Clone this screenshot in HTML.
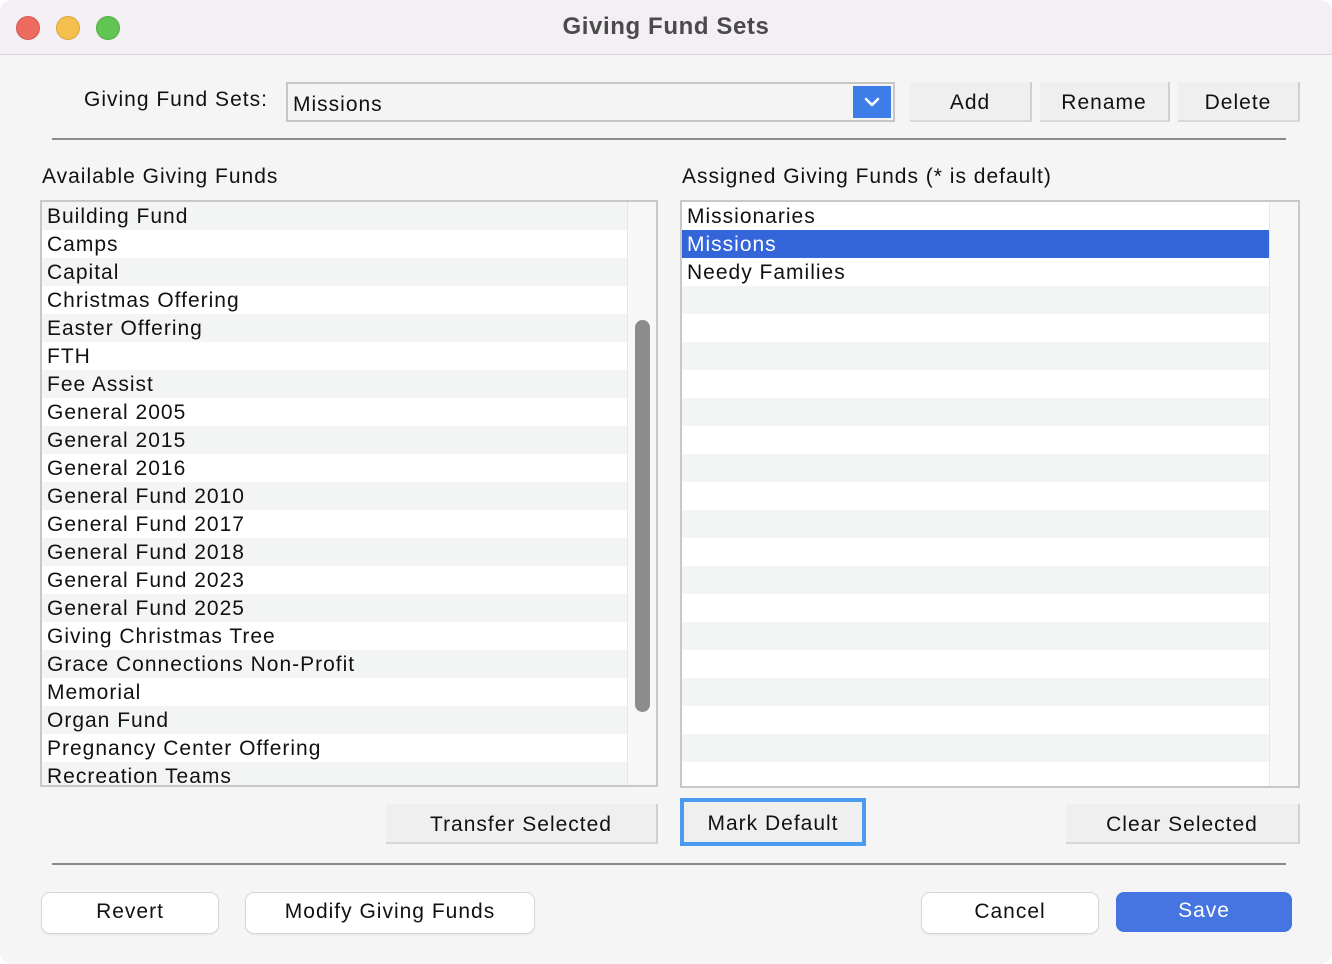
<!DOCTYPE html>
<html><head><meta charset="utf-8"><style>
*{margin:0;padding:0;box-sizing:border-box}
body{width:1332px;height:964px;background:#fff;font-family:"Liberation Sans",sans-serif;color:#111;position:relative;overflow:hidden}
.win{position:absolute;left:0;top:0;width:1332px;height:964px;background:#f5f5f5;border-radius:12px;overflow:hidden}
.title{position:absolute;left:0;top:0;width:1332px;height:55px;background:#f3eff5;border-bottom:1px solid #d4d2d6}
.title .t{position:absolute;left:0;width:100%;top:13px;text-align:center;font-weight:bold;font-size:24px;color:#4a4a4a;letter-spacing:.6px}
.dot{position:absolute;top:16px;width:24px;height:24px;border-radius:50%}
.a{position:absolute;font-size:21px;white-space:nowrap;letter-spacing:1px}
.hr{position:absolute;height:2px;background:#8a8a8a}
.list{position:absolute;border:2px solid #c8c8c8;background:#fff;overflow:hidden}
.row{height:28px;line-height:30px;padding-left:5px;font-size:21px;white-space:nowrap;letter-spacing:1px}
.g{background:#f3f4f4}
.fb{position:absolute;background:#efefef;border-bottom:2px solid #d8d8d8;border-right:2px solid #d0d0d0;font-size:21px;text-align:center;letter-spacing:1px}
.rb{position:absolute;background:#fff;border-radius:8px;box-shadow:0 0 0 1px #d6d6d6,0 1px 2px rgba(0,0,0,.15);font-size:21px;text-align:center;letter-spacing:1px}
</style></head><body>
<div class="win">
<div class="title">
<div class="dot" style="left:16px;background:#ec6a5e;border:1px solid #d55a4f"></div>
<div class="dot" style="left:56px;background:#f4bf4f;border:1px solid #d9a53c"></div>
<div class="dot" style="left:96px;background:#61c554;border:1px solid #4fae43"></div>
<div class="t">Giving Fund Sets</div>
</div>

<div class="a" style="left:84px;top:88px">Giving Fund Sets:</div>
<div style="position:absolute;left:286px;top:82px;width:609px;height:40px;border:2px solid #c6c6c6;background:#f4f4f4">
<div class="a" style="left:5px;top:9px">Missions</div>
<div style="position:absolute;right:2px;top:2px;width:38px;height:32px;background:#3d7de8">
<svg width="38" height="32" viewBox="0 0 38 32"><path d="M13 13l6 6 6-6" fill="none" stroke="#fff" stroke-width="2.5" stroke-linecap="round" stroke-linejoin="round"/></svg></div>
</div>
<div class="fb" style="left:910px;top:82px;width:122px;height:40px;line-height:42px">Add</div>
<div class="fb" style="left:1040px;top:82px;width:130px;height:40px;line-height:42px">Rename</div>
<div class="fb" style="left:1178px;top:82px;width:122px;height:40px;line-height:42px">Delete</div>
<div class="hr" style="left:52px;top:138px;width:1234px"></div>

<div class="a" style="left:42px;top:165px">Available Giving Funds</div>
<div class="a" style="left:682px;top:165px">Assigned Giving Funds (* is default)</div>

<div class="list" style="left:40px;top:200px;width:618px;height:587px">
<div style="width:587px">
<div class="row g">Building Fund</div><div class="row">Camps</div><div class="row g">Capital</div><div class="row">Christmas Offering</div><div class="row g">Easter Offering</div><div class="row">FTH</div><div class="row g">Fee Assist</div><div class="row">General 2005</div><div class="row g">General 2015</div><div class="row">General 2016</div><div class="row g">General Fund 2010</div><div class="row">General Fund 2017</div><div class="row g">General Fund 2018</div><div class="row">General Fund 2023</div><div class="row g">General Fund 2025</div><div class="row">Giving Christmas Tree</div><div class="row g">Grace Connections Non-Profit</div><div class="row">Memorial</div><div class="row g">Organ Fund</div><div class="row">Pregnancy Center Offering</div><div class="row g">Recreation Teams</div>
</div>
<div style="position:absolute;left:585px;top:0;width:31px;height:100%;background:#f7f7f7;border-left:1px solid #e6e6e6"></div>
<div style="position:absolute;left:593px;top:118px;width:15px;height:392px;border-radius:8px;background:#8c8c8c"></div>
</div>

<div class="list" style="left:680px;top:200px;width:620px;height:588px">
<div style="width:587px">
<div class="row">Missionaries</div><div class="row" style="background:#3465d9;color:#fff">Missions</div><div class="row">Needy Families</div>
<div class="row g"></div><div class="row"></div><div class="row g"></div><div class="row"></div><div class="row g"></div><div class="row"></div><div class="row g"></div><div class="row"></div><div class="row g"></div><div class="row"></div><div class="row g"></div><div class="row"></div><div class="row g"></div><div class="row"></div><div class="row g"></div><div class="row"></div><div class="row g"></div><div class="row"></div>
</div>
<div style="position:absolute;left:587px;top:0;width:31px;height:100%;background:#f7f7f7;border-left:1px solid #e6e6e6"></div>
</div>

<div class="fb" style="left:386px;top:804px;width:272px;height:40px;line-height:42px">Transfer Selected</div>
<div style="position:absolute;left:680px;top:798px;width:186px;height:48px;border:4px solid #4a9cf0;background:#efefef;font-size:21px;text-align:center;line-height:44px;letter-spacing:1px">Mark Default</div>
<div class="fb" style="left:1066px;top:804px;width:234px;height:40px;line-height:42px">Clear Selected</div>
<div class="hr" style="left:52px;top:863px;width:1234px"></div>

<div class="rb" style="left:42px;top:893px;width:176px;height:40px;line-height:38px">Revert</div>
<div class="rb" style="left:246px;top:893px;width:288px;height:40px;line-height:38px">Modify Giving Funds</div>
<div class="rb" style="left:922px;top:893px;width:176px;height:40px;line-height:38px">Cancel</div>
<div class="rb" style="left:1116px;top:892px;width:176px;height:40px;line-height:38px;background:#4674e0;color:#fff;box-shadow:none">Save</div>
</div>
</body></html>
